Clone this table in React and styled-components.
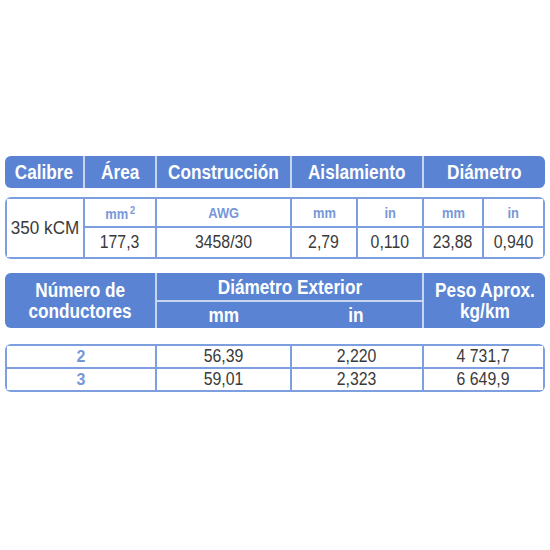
import React from "react";
import styled, { createGlobalStyle } from "styled-components";

const GlobalStyle = createGlobalStyle`
  html, body { margin: 0; padding: 0; background: #fff; }
  body { font-family: "Liberation Sans", Arial, sans-serif; }
`;

const BLUE = "#5a84d3";
const LINE = "#7d9fe0";
const DIVIDER = "#c7d5f1";
const UNIT = "#7797d8";

const Page = styled.div`
  width: 540px;
  padding: 156px 0 0 5px;
  display: flex;
  flex-direction: column;
`;

const Header = styled.div`
  display: grid;
  grid-template-columns: ${({ $cols }) => $cols};
  gap: 2px;
  background: ${DIVIDER};
  border-radius: 6px;
  overflow: hidden;
  height: ${({ $h }) => $h}px;
  margin-top: ${({ $mt }) => $mt || 0}px;
`;

const HeadCell = styled.div`
  background: ${BLUE};
  color: #fff;
  font-weight: bold;
  font-size: 20px;
  line-height: 21px;
  display: flex;
  flex-direction: column;
  align-items: center;
  justify-content: center;
  text-align: center;
`;

const HeadGroup = styled.div`
  display: grid;
  grid-template-columns: 133px 1fr;
  grid-template-rows: 27px 1fr;
  row-gap: 2px;
  background: ${DIVIDER};
`;

const GroupTitle = styled(HeadCell)`
  grid-column: 1 / 3;
  padding-top: 2px;
`;

const Narrow = styled.span`
  display: inline-block;
  white-space: nowrap;
  transform: scaleX(${({ $s }) => $s || 0.86});
`;

const Table = styled.div`
  display: grid;
  grid-template-columns: ${({ $cols }) => $cols};
  grid-template-rows: ${({ $rows }) => $rows};
  gap: 2px;
  padding: 2px;
  background: ${LINE};
  border-radius: 6px;
  margin-top: ${({ $mt }) => $mt}px;
`;

const Cell = styled.div`
  background: #fff;
  display: flex;
  align-items: center;
  justify-content: center;
  color: #3a3a3a;
  font-size: ${({ $big }) => ($big ? 19 : 18)}px;
  grid-row: ${({ $span }) => ($span ? "1 / 3" : "auto")};
`;

const Unit = styled(Cell)`
  color: ${UNIT};
  font-weight: bold;
  font-size: 14px;
  padding-top: 1px;
`;

const Num = styled(Cell)`
  color: ${UNIT};
  font-weight: bold;
  font-size: 16px;
`;

const Sup = styled.span`
  font-size: 10px;
  vertical-align: 5px;
  margin-left: 2px;
`;

export default function App() {
  return (
    <>
      <GlobalStyle />
      <Page>
        <Header $cols="78px 70px 133px 130px 1fr" $h={32}>
          <HeadCell><Narrow>Calibre</Narrow></HeadCell>
          <HeadCell><Narrow>Área</Narrow></HeadCell>
          <HeadCell><Narrow>Construcción</Narrow></HeadCell>
          <HeadCell><Narrow>Aislamiento</Narrow></HeadCell>
          <HeadCell><Narrow>Diámetro</Narrow></HeadCell>
        </Header>

        <Table $mt={9} $cols="76px 70px 133px 64px 64px 58px 1fr" $rows="27px 29px">
          <Cell $span $big><Narrow $s={0.9}>350 kCM</Narrow></Cell>
          <Unit><Narrow $s={0.92}>mm<Sup>2</Sup></Narrow></Unit>
          <Unit><Narrow $s={0.92}>AWG</Narrow></Unit>
          <Unit><Narrow $s={0.92}>mm</Narrow></Unit>
          <Unit><Narrow $s={0.92}>in</Narrow></Unit>
          <Unit><Narrow $s={0.92}>mm</Narrow></Unit>
          <Unit><Narrow $s={0.92}>in</Narrow></Unit>
          <Cell><Narrow $s={0.88}>177,3</Narrow></Cell>
          <Cell><Narrow $s={0.88}>3458/30</Narrow></Cell>
          <Cell><Narrow $s={0.88}>2,79</Narrow></Cell>
          <Cell><Narrow $s={0.88}>0,110</Narrow></Cell>
          <Cell><Narrow $s={0.88}>23,88</Narrow></Cell>
          <Cell><Narrow $s={0.88}>0,940</Narrow></Cell>
        </Table>

        <Header $cols="150px 265px 1fr" $h={55} $mt={14}>
          <HeadCell>
            <Narrow>Número de</Narrow>
            <Narrow>conductores</Narrow>
          </HeadCell>
          <HeadGroup>
            <GroupTitle><Narrow>Diámetro Exterior</Narrow></GroupTitle>
            <HeadCell><Narrow>mm</Narrow></HeadCell>
            <HeadCell><Narrow>in</Narrow></HeadCell>
          </HeadGroup>
          <HeadCell>
            <Narrow>Peso Aprox.</Narrow>
            <Narrow>kg/km</Narrow>
          </HeadCell>
        </Header>

        <Table $mt={16} $cols="148px 133px 130px 1fr" $rows="21px 21px">
          <Num>2</Num>
          <Cell><Narrow $s={0.88}>56,39</Narrow></Cell>
          <Cell><Narrow $s={0.88}>2,220</Narrow></Cell>
          <Cell><Narrow $s={0.88}>4 731,7</Narrow></Cell>
          <Num>3</Num>
          <Cell><Narrow $s={0.88}>59,01</Narrow></Cell>
          <Cell><Narrow $s={0.88}>2,323</Narrow></Cell>
          <Cell><Narrow $s={0.88}>6 649,9</Narrow></Cell>
        </Table>
      </Page>
    </>
  );
}
